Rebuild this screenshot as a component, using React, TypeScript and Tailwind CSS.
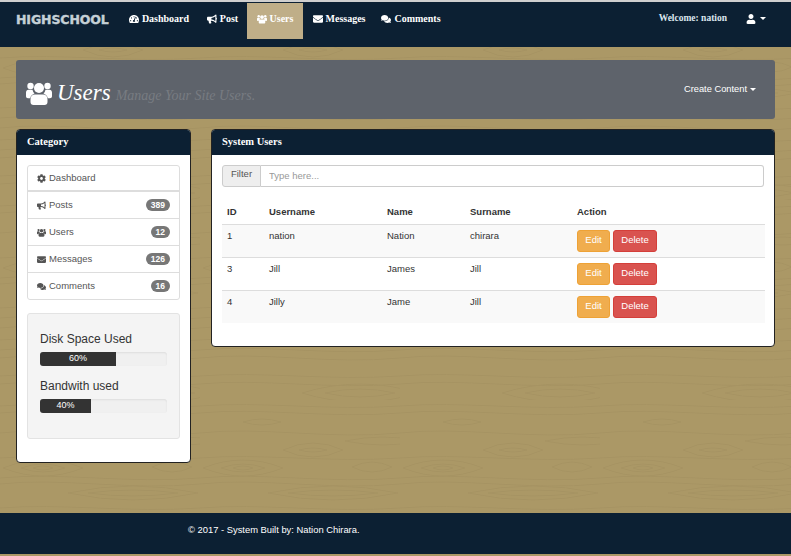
import React from 'react';
import { FaCog, FaBullhorn, FaEnvelope, FaComments, FaUser, FaTachometerAlt } from 'react-icons/fa';

const UsersIcon = ({ className }: { className?: string }) => (
  <svg className={className} viewBox="0 0 26 26" fill="currentColor">
    <circle cx="13" cy="8" r="5" />
    <circle cx="4.5" cy="6" r="3.2" />
    <circle cx="21.5" cy="6" r="3.2" />
    <path d="M0 12.5c0-1.5 1-2.8 2.5-2.8h4c.3 1.6 1 2.9 2 3.9-2 .7-3.8 2.4-4.3 4.6H2c-1.2 0-2-.8-2-2zM26 12.5c0-1.500-1-2.800-2.500-2.800h-4c-.3 1.600-1 2.900-2 3.900 2 .7 3.800 2.400 4.300 4.600H24c1.200 0 2-.8 2-2z" />
    <path d="M9 14.500h8c2.800 0 4.500 2 4.500 4.800v2.700c0 1.800-1.200 3-3 3h-11c-1.800 0-3-1.200-3-3v-2.700c0-2.800 1.700-4.800 4.500-4.800z" />
  </svg>
);

const navItems = [
  { label: 'Dashboard', icon: FaTachometerAlt, width: 'w-[72px]' },
  { label: 'Post', icon: FaBullhorn, width: 'w-[52px] pl-[3px]' },
  { label: 'Users', icon: UsersIcon, width: 'w-[56px]', active: true },
  { label: 'Messages', icon: FaEnvelope, width: 'w-[72px]' },
  { label: 'Comments', icon: FaComments, width: 'w-[72px]' },
];

const categories = [
  { label: 'Posts', icon: FaBullhorn, count: 389 },
  { label: 'Users', icon: UsersIcon, count: 12 },
  { label: 'Messages', icon: FaEnvelope, count: 126 },
  { label: 'Comments', icon: FaComments, count: 16 },
];

const users = [
  { id: 1, username: 'nation', name: 'Nation', surname: 'chirara' },
  { id: 3, username: 'Jill', name: 'James', surname: 'Jill' },
  { id: 4, username: 'Jilly', name: 'Jame', surname: 'Jill' },
];

// knots of the wood tile: centre x, centre y, half width, half height
const knots = [
  [160, 193, 35, 4],
  [160, 193, 58, 9],
  [62, 22, 19, 3],
  [183, 41, 38, 4],
  [113, 50, 14, 2],
  [113, 50, 30, 7],
  [43, 68, 10, 2],
  [43, 68, 22, 4],
  [43, 68, 40, 8],
  [172, 67, 20, 5],
  [133, 93, 45, 3],
  [133, 93, 65, 7],
];

const waves = [6, 13, 33, 58, 78, 84, 108, 118, 128, 140, 150, 158, 176, 184];

const lens = ([x, y, w, h]: number[]) =>
  `M${x - w} ${y} Q${x} ${y - h * 2} ${x + w} ${y} Q${x} ${y + h * 2} ${x - w} ${y}Z`;

const WoodGrain = () => (
  <svg className="absolute inset-0 h-full w-full">
    <defs>
      <pattern id="wood" width="200" height="200" patternUnits="userSpaceOnUse">
        {waves.map((y, i) => (
          <path
            key={y}
            d={`M0 ${y} C 60 ${y - 5 - (i % 3)}, 130 ${y + 5 + (i % 3)}, 200 ${y}`}
            fill="none"
            stroke="#a69362"
          />
        ))}
        {knots.map((k, i) => (
          <path key={i} d={lens(k)} fill="none" stroke="#a69362" />
        ))}
      </pattern>
    </defs>
    <rect width="100%" height="100%" fill="url(#wood)" />
  </svg>
);

const Meter = ({ label, value, barWidth }: { label: string; value: string; barWidth: string }) => (
  <div>
    <p className="text-[12px] leading-[17px] text-[#333]">{label}</p>
    <div className="mt-[4px] h-[14px] overflow-hidden rounded-[3px] bg-[#f0f0f0] shadow-[inset_0_1px_2px_rgba(0,0,0,0.08)]">
      <div className={`flex h-full ${barWidth} items-center justify-center bg-[#333] text-[9px] text-white`}>
        {value}
      </div>
    </div>
  </div>
);

const PanelHeading = ({ children }: { children: React.ReactNode }) => (
  <div className="flex h-[25px] items-center bg-[#0c2033] px-[10px] pb-px font-['Liberation_Serif',serif] text-[10.5px] font-bold text-white">
    {children}
  </div>
);

export default function App() {
  return (
    <div className="relative flex h-[556px] w-[791px] flex-col overflow-hidden bg-[#ab9866] font-['Liberation_Sans',sans-serif] text-[9.5px] text-[#333]">
      <WoodGrain />

      <div className="relative h-[2px] bg-[#cfcfcf]" />

      <nav className="relative flex h-[45px] items-start bg-[#0c2033] pt-px pr-[25px] pl-[16px] font-['Liberation_Serif',serif] text-[10px] font-bold text-white">
        <span className="mt-[10px] w-[96px] font-['DejaVu_Sans',sans-serif] text-[12.5px] leading-[14px] font-bold tracking-[-0.1px] text-[#c5d0d6] [-webkit-text-stroke:0.4px_#c5d0d6]">
          HIGHSCHOOL
        </span>
        <ul className="ml-[11px] flex">
          {navItems.map((item) => (
            <li
              key={item.label}
              className={`flex h-[36px] ${item.width} items-center justify-center gap-[3px] pb-[5px] ${item.active ? 'bg-[#bfae88]' : ''}`}
            >
              <item.icon className="h-[10px] w-[10px]" />
              {item.label}
            </li>
          ))}
        </ul>
        <div className="ml-auto flex h-[36px] items-center pb-[5px]">
          <span className="text-[9.5px] text-[#dbe6ee]">Welcome: nation</span>
          <FaUser className="ml-[19px] h-[10px] w-[10px]" />
          <span className="ml-[4px] border-x-[3px] border-t-[3px] border-x-transparent border-t-white" />
        </div>
      </nav>

      <div className="relative flex flex-col px-[16px] pt-[13px]">
        <header className="flex h-[59px] items-center rounded-[3px] bg-[#5e636b] pt-[6px] pr-[19px] pl-[10px]">
          <UsersIcon className="h-[26px] w-[26px] text-white" />
          <h1 className="ml-[5px] font-['Liberation_Serif',serif] text-[23px] leading-none text-white italic">Users</h1>
          <span className="mt-[5px] ml-[5px] font-['Liberation_Serif',serif] text-[14px] text-[#787c82] italic">
            Manage Your Site Users.
          </span>
          <div className="mb-[6px] ml-auto flex items-center gap-[3px] text-[9.3px] text-white">
            Create Content
            <span className="border-x-[3px] border-t-[3px] border-x-transparent border-t-white" />
          </div>
        </header>

        <div className="mt-[10px] flex items-start gap-[20px]">
          <aside className="h-[334px] w-[175px] overflow-hidden rounded-[4px] border border-[#222] bg-white">
            <PanelHeading>Category</PanelHeading>
            <div className="px-[10px] pt-[10px]">
              <ul className="overflow-hidden rounded-[3px] border border-[#ddd] text-[#555]">
                <li className="flex h-[26px] items-center gap-[3px] border-b-2 border-[#ddd] pl-[9px]">
                  <FaCog className="h-[9px] w-[9px]" />
                  Dashboard
                </li>
                {categories.map((cat) => (
                  <li key={cat.label} className="flex h-[27px] items-center gap-[3px] border-b border-[#ddd] pr-[9px] pl-[9px] last:h-[26px] last:border-b-0">
                    <cat.icon className="h-[9px] w-[9px]" />
                    {cat.label}
                    <span className="ml-auto rounded-full bg-[#777] px-[5px] text-[8.5px] leading-[12px] font-bold text-white">
                      {cat.count}
                    </span>
                  </li>
                ))}
              </ul>

              <div className="mt-[13px] flex h-[126px] flex-col gap-[12px] rounded-[3px] border border-[#e3e3e3] bg-[#f4f4f4] px-[12px] pt-[17px]">
                <Meter label="Disk Space Used" value="60%" barWidth="w-[60%]" />
                <Meter label="Bandwith used" value="40%" barWidth="w-[40%]" />
              </div>
            </div>
          </aside>

          <main className="h-[218px] flex-1 overflow-hidden rounded-[4px] border border-[#222] bg-white">
            <PanelHeading>System Users</PanelHeading>
            <div className="px-[10px] pt-[10px]">
              <div className="flex h-[22px]">
                <span className="flex w-[39px] items-center justify-center rounded-l-[3px] border border-[#ccc] bg-[#eee] pb-[3px] text-[#555]">
                  Filter
                </span>
                <input
                  readOnly
                  placeholder="Type here..."
                  className="min-w-0 flex-1 rounded-r-[3px] border border-l-0 border-[#ccc] bg-white px-[8px] text-[9.5px] outline-none placeholder:text-[#999]"
                />
              </div>

              <table className="mt-[13px] w-[543px] table-fixed border-collapse text-left">
                <thead>
                  <tr className="h-[24px] border-b border-[#ddd] text-[#333]">
                    <th className="w-[42px] pl-[5px] font-bold">ID</th>
                    <th className="w-[118px] pl-[5px] font-bold">Username</th>
                    <th className="w-[83px] pl-[5px] font-bold">Name</th>
                    <th className="w-[107px] pl-[5px] font-bold">Surname</th>
                    <th className="pl-[5px] font-bold">Action</th>
                  </tr>
                </thead>
                <tbody>
                  {users.map((user) => (
                    <tr key={user.id} className="h-[33px] border-b border-[#ddd] align-top last:border-b-0 odd:bg-[#f9f9f9]">
                      <td className="pt-[4px] pl-[5px]">{user.id}</td>
                      <td className="pt-[4px] pl-[5px]">{user.username}</td>
                      <td className="pt-[4px] pl-[5px]">{user.name}</td>
                      <td className="pt-[4px] pl-[5px]">{user.surname}</td>
                      <td className="pt-[5px] pl-[5px]">
                        <div className="flex gap-[3px]">
                          <button className="flex h-[22px] w-[33px] items-center justify-center rounded-[3px] border border-[#eea236] bg-[#f0ad4e] pb-px text-white">
                            Edit
                          </button>
                          <button className="flex h-[22px] w-[44px] items-center justify-center rounded-[3px] border border-[#d43f3a] bg-[#d9534f] pb-px text-white">
                            Delete
                          </button>
                        </div>
                      </td>
                    </tr>
                  ))}
                </tbody>
              </table>
            </div>
          </main>
        </div>
      </div>

      <footer className="relative mt-auto mb-[2px] flex h-[41px] items-center bg-[#0c2033] pb-[7px] pl-[188px] text-[9.4px] text-white">
        © 2017 - System Built by: Nation Chirara.
      </footer>
    </div>
  );
}
